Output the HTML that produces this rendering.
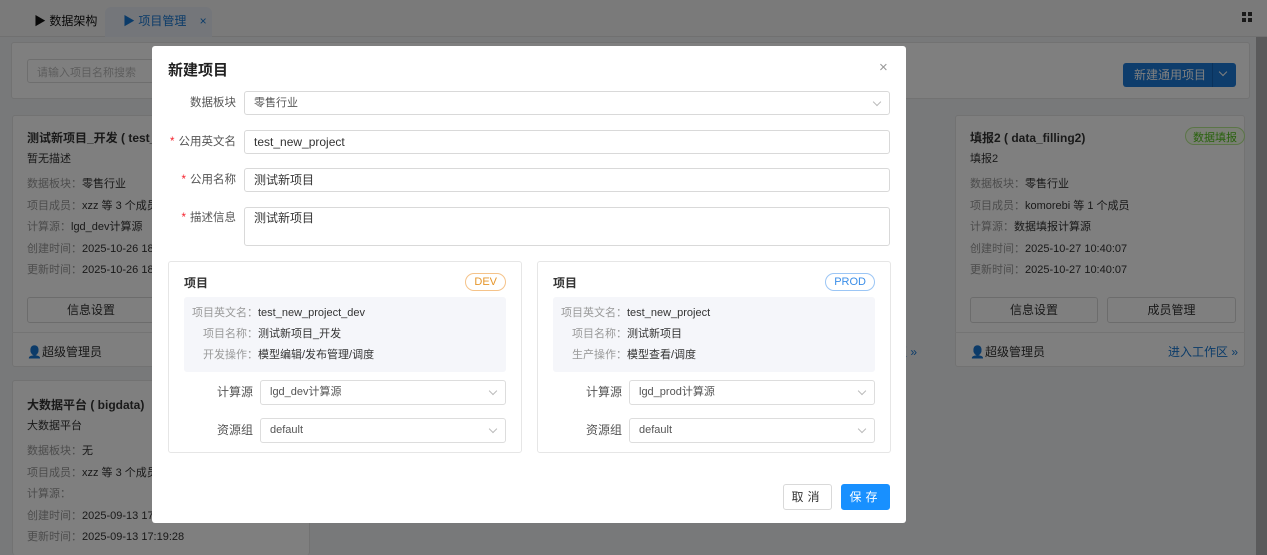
<!DOCTYPE html>
<html style="overflow:hidden;width:1267px;height:555px"><head><meta charset="utf-8"><style>
*{box-sizing:border-box;margin:0;padding:0}
body{width:1267px;height:555px;overflow:hidden;position:relative;background:#f0f2f5;font-family:"Liberation Sans","Noto Sans CJK SC",sans-serif;font-size:12px;color:#333}
.a{position:absolute}
.card{position:absolute;background:#fff;border:1px solid #e4e4e4;border-radius:3px}
.lbl{color:#999}
.btn{position:absolute;border:1px solid #d9d9d9;border-radius:3px;text-align:center;line-height:24px;font-size:12px;background:#fff}
.ov{position:absolute;left:0;top:0;width:1267px;height:555px;background:rgba(0,0,0,0.5)}
.modal{position:absolute;left:152px;top:46px;width:754px;height:477px;background:#fff;border-radius:3px}
.fl{position:absolute;width:84px;text-align:right;font-size:11.5px;color:#555;line-height:24px;left:0}
.fl i{color:#f5222d;font-style:normal;margin-right:4px}
.in{position:absolute;left:92px;width:646px;height:24px;border:1px solid #d9d9d9;border-radius:3px;padding-left:9px;line-height:22px;font-size:12px;color:#333}
.chev{position:absolute;right:9px;top:7px;width:6px;height:6px;border-right:1px solid #bbb;border-bottom:1px solid #bbb;transform:rotate(45deg)}
.sub{position:absolute;top:215px;width:354px;height:192px;border:1px solid #e6e6e6;border-radius:3px}
.sub .t{position:absolute;left:15px;top:12px;font-weight:bold;font-size:12px;color:#333}
.tag{position:absolute;right:15px;top:11px;height:18px;border-radius:9px;font-size:11px;line-height:16px;padding:0 8px}
.info{position:absolute;left:15px;top:35px;width:322px;height:75px;background:#f5f6fa;border-radius:3px}
.info div{position:absolute;font-size:11px;color:#333;line-height:14px}
.info span{color:#999;display:inline-block;width:69px;text-align:right}
.sl{position:absolute;left:34px;width:50px;text-align:right;font-size:12px;color:#555;line-height:25px}
.si{position:absolute;left:91px;width:246px;height:25px;border:1px solid #ddd;border-radius:3px;padding-left:9px;line-height:23px;font-size:11px;color:#555}
</style></head><body>
<div class="a" style="left:0;top:0;width:1267px;height:37px;background:#f5f5f5;border-bottom:1px solid #e0e0e0"></div>
<div class="a" style="left:34px;top:12px;font-size:12px;color:#111">▶ 数据架构</div>
<div class="a" style="left:105px;top:7px;width:107px;height:30px;background:#e8edf5;border-radius:6px 6px 0 0"></div>
<div class="a" style="left:123px;top:12px;font-size:12px;color:#1677d2">▶ 项目管理 <span style="margin-left:10px">×</span></div>
<div class="a" style="left:1242px;top:12px;width:10px;height:10px;background:
linear-gradient(#333,#333) 0 0/4px 4px no-repeat,linear-gradient(#333,#333) 6px 0/4px 4px no-repeat,linear-gradient(#333,#333) 0 6px/4px 4px no-repeat,linear-gradient(#333,#333) 6px 6px/4px 4px no-repeat"></div>
<div class="card" style="left:11px;top:42px;width:1239px;height:57px"></div>
<div class="a" style="left:27px;top:59px;width:150px;height:24px;border:1px solid #ddd;border-radius:3px;color:#bbb;padding:4px 9px;font-size:11px">请输入项目名称搜索</div>
<div class="a" style="left:1123px;top:63px;width:113px;height:24px;background:#1d7bd8;border-radius:3px;color:#fff;font-size:12px;line-height:24px;padding-left:11px">新建通用项目<span style="position:absolute;left:89px;top:0;height:24px;border-left:1px solid #1565b8"></span><span style="position:absolute;left:97px;top:6px;width:6px;height:6px;border-right:1px solid #fff;border-bottom:1px solid #fff;transform:rotate(45deg)"></span></div>

<div class="card" style="left:12px;top:115px;width:298px;height:252px"></div>
<div class="a" style="left:27px;top:129px;font-weight:bold">测试新项目_开发 ( test_ne</div>
<div class="a" style="left:27px;top:150px;font-size:11px">暂无描述</div>
<div class="a" style="left:27px;top:174px;font-size:11px;line-height:21.5px"><span class="lbl">数据板块：</span>零售行业<br><span class="lbl">项目成员：</span>xzz 等 3 个成员<br><span class="lbl">计算源：</span>lgd_dev计算源<br><span class="lbl">创建时间：</span>2025-10-26 18:03<br><span class="lbl">更新时间：</span>2025-10-26 18:03</div>
<div class="btn" style="left:27px;top:297px;width:128px">信息设置</div>
<div class="a" style="left:12px;top:332px;width:298px;border-top:1px solid #e8e8e8"></div>
<div class="a" style="left:27px;top:343px;font-size:12px">👤超级管理员</div>

<div class="card" style="left:12px;top:380px;width:298px;height:175px;border-bottom:none"></div>
<div class="a" style="left:27px;top:396px;font-weight:bold">大数据平台 ( bigdata)</div>
<div class="a" style="left:27px;top:417px;font-size:11px">大数据平台</div>
<div class="a" style="left:27px;top:441px;font-size:11px;line-height:21.5px"><span class="lbl">数据板块：</span>无<br><span class="lbl">项目成员：</span>xzz 等 3 个成员<br><span class="lbl">计算源：</span><br><span class="lbl">创建时间：</span>2025-09-13 17:19:28<br><span class="lbl">更新时间：</span>2025-09-13 17:19:28</div>

<div class="card" style="left:955px;top:115px;width:290px;height:252px"></div>
<div class="a" style="left:970px;top:129px;font-weight:bold">填报2 ( data_filling2)</div>
<div class="a" style="left:1185px;top:127px;height:18px;border:1px solid #b7eb8f;border-radius:9px;color:#52c41a;font-size:11px;padding:1px 7px;background:#f6ffed">数据填报</div>
<div class="a" style="left:970px;top:150px;font-size:11px">填报2</div>
<div class="a" style="left:970px;top:174px;font-size:11px;line-height:21.5px"><span class="lbl">数据板块：</span>零售行业<br><span class="lbl">项目成员：</span>komorebi 等 1 个成员<br><span class="lbl">计算源：</span>数据填报计算源<br><span class="lbl">创建时间：</span>2025-10-27 10:40:07<br><span class="lbl">更新时间：</span>2025-10-27 10:40:07</div>
<div class="btn" style="left:970px;top:297px;width:128px">信息设置</div>
<div class="btn" style="left:1107px;top:297px;width:129px">成员管理</div>
<div class="a" style="left:955px;top:332px;width:290px;border-top:1px solid #e8e8e8"></div>
<div class="a" style="left:970px;top:343px;font-size:12px">👤超级管理员</div>
<div class="a" style="left:1168px;top:343px;font-size:12px;color:#1677d2">进入工作区 »</div>
<div class="a" style="left:895px;top:343px;font-size:12px;color:#1677d2">区 »</div>

<div class="ov"></div>
<div class="a" style="left:1256px;top:37px;width:11px;height:518px;background:rgba(0,0,0,0.25)"></div>

<div class="modal">
<div class="a" style="left:16px;top:13px;font-size:15px;font-weight:bold;color:#222">新建项目</div>
<div class="a" style="left:727px;top:13px;font-size:15px;color:#999">×</div>
<div class="a" style="left:0;top:45px;width:754px">
 <div class="fl">数据板块</div>
 <div class="in" style="color:#555;font-size:11px">零售行业<span class="chev"></span></div>
</div>
<div class="a" style="left:0;top:84px;width:754px">
 <div class="fl"><i>*</i>公用英文名</div>
 <div class="in">test_new_project</div>
</div>
<div class="a" style="left:0;top:122px;width:754px">
 <div class="fl"><i>*</i>公用名称</div>
 <div class="in">测试新项目</div>
</div>
<div class="a" style="left:0;top:161px;width:754px">
 <div class="fl" style="line-height:22px"><i>*</i>描述信息</div>
 <div class="in" style="height:39px;line-height:20px">测试新项目</div>
</div>

<div class="sub" style="left:16px">
 <div class="t">项目</div>
 <div class="tag" style="border:1px solid #f5c38a;color:#e6962b">DEV</div>
 <div class="info">
  <div style="top:9px;left:5px"><span>项目英文名：</span>test_new_project_dev</div>
  <div style="top:30px;left:5px"><span>项目名称：</span>测试新项目_开发</div>
  <div style="top:51px;left:5px"><span>开发操作：</span>模型编辑/发布管理/调度</div>
 </div>
 <div class="sl" style="top:118px">计算源</div>
 <div class="si" style="top:118px">lgd_dev计算源<span class="chev"></span></div>
 <div class="sl" style="top:156px">资源组</div>
 <div class="si" style="top:156px">default<span class="chev"></span></div>
</div>
<div class="sub" style="left:385px">
 <div class="t">项目</div>
 <div class="tag" style="border:1px solid #9cc6f5;color:#3b8ee8">PROD</div>
 <div class="info">
  <div style="top:9px;left:5px"><span>项目英文名：</span>test_new_project</div>
  <div style="top:30px;left:5px"><span>项目名称：</span>测试新项目</div>
  <div style="top:51px;left:5px"><span>生产操作：</span>模型查看/调度</div>
 </div>
 <div class="sl" style="top:118px">计算源</div>
 <div class="si" style="top:118px">lgd_prod计算源<span class="chev"></span></div>
 <div class="sl" style="top:156px">资源组</div>
 <div class="si" style="top:156px">default<span class="chev"></span></div>
</div>

<div class="btn" style="left:631px;top:438px;width:49px;letter-spacing:4px;color:#333">取消</div>
<div class="btn" style="left:689px;top:438px;width:49px;letter-spacing:4px;background:#1890ff;border-color:#1890ff;color:#fff">保存</div>
</div>
</body></html>
